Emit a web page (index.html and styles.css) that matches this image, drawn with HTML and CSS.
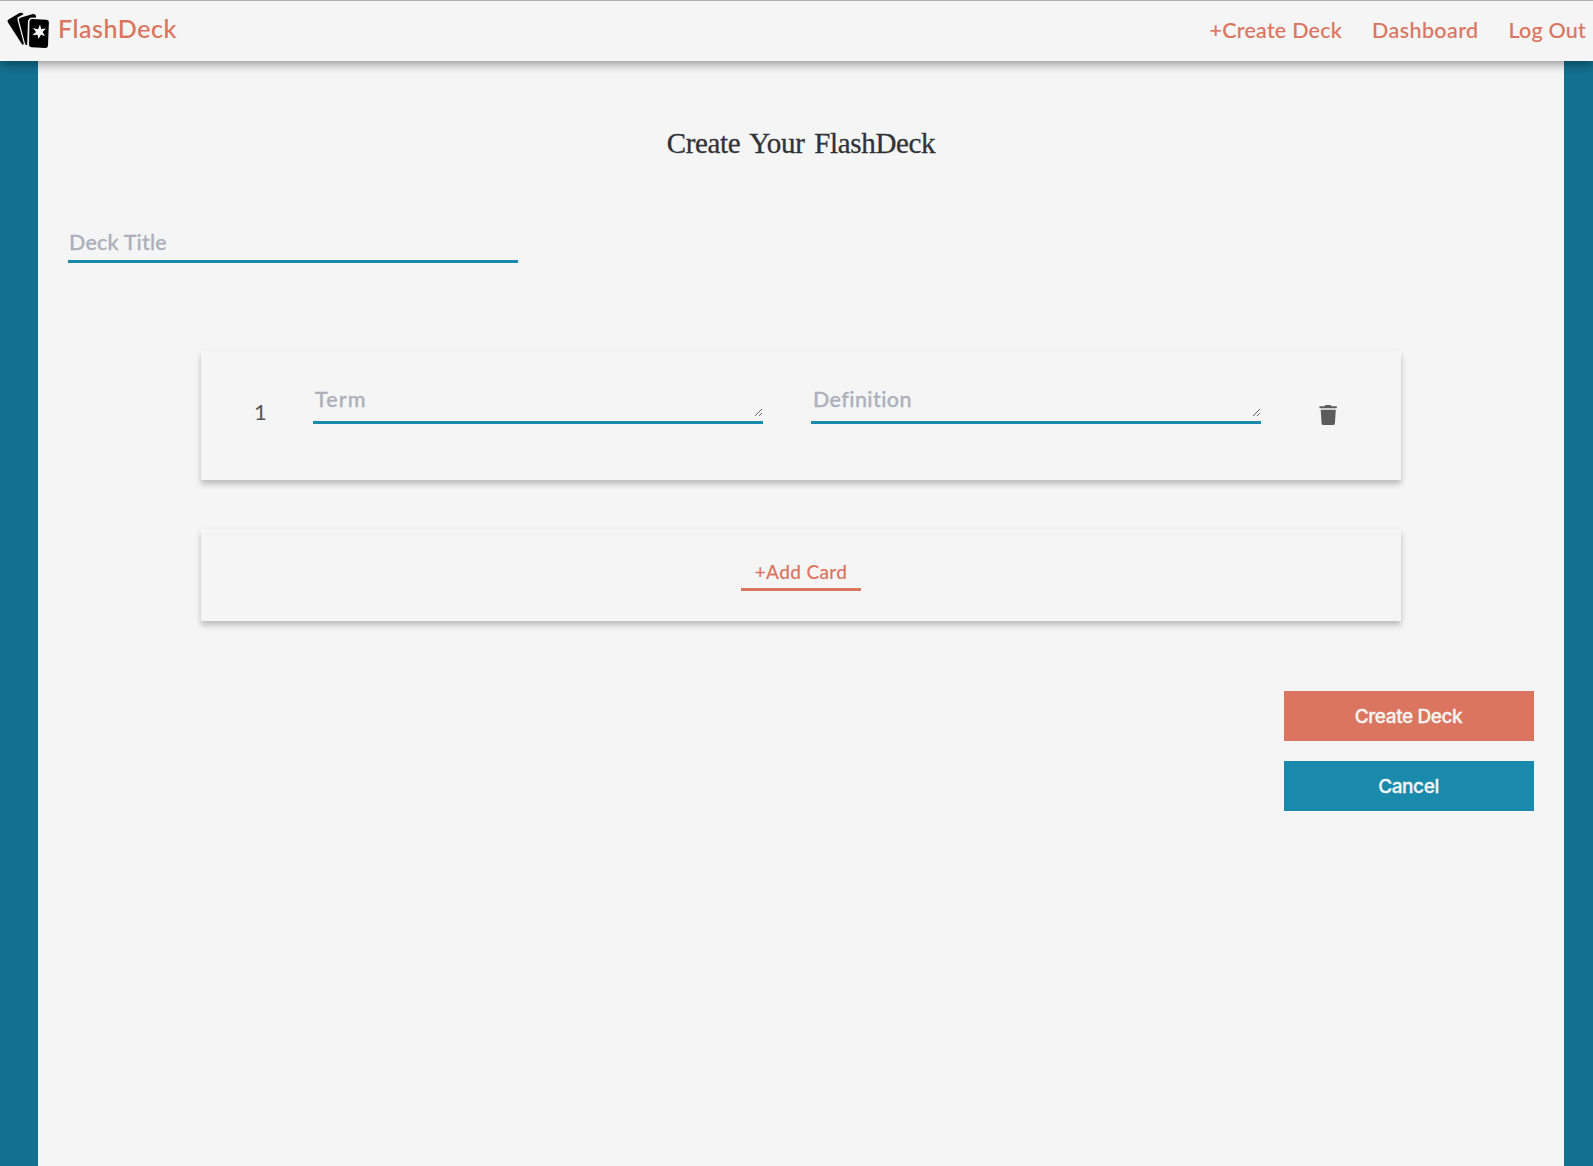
FILE: index.html
```html
<!DOCTYPE html>
<html lang="en">
<head>
<meta charset="utf-8">
<title>FlashDeck</title>
<link rel="stylesheet" href="styles.css">
</head>
<body>
<header class="header">
  <a class="brand">
    <svg class="logo" viewBox="0 0 56 56" aria-hidden="true">
      <path d="M8 22.500 Q6.500 21 8.500 19.500 L19 13.300 Q22 12 23.500 14.200 L17.500 17.500 L17.500 20 L23.800 43.500 Q23 46 21.500 43.500 Z"/>
      <path d="M19 20.500 Q18.500 18.200 21 17.500 L33 14 Q35.500 13.600 36 16 L36 17.400 L30 17.800 L28 20.500 L27.200 45 Q25.500 45.500 25 43.500 Z"/>
      <path d="M32 19 L46.500 19.700 Q49 20 48.900 22.300 L48 45.500 Q47.800 48 45.500 48 L31.500 47.300 Q29 47 29 44.700 L29.500 21.300 Q29.700 19 32 19 Z"/>
      <path class="logo-star" d="M40 24.500 L41.200 29 L46 28.500 L42.600 32 L45 36 L40.900 34.800 L38.500 39 L37.500 34.800 L32.300 35.300 L36 31.900 L33 28 L38 29.200 Z"/>
    </svg>
    <span class="brand-name">FlashDeck</span>
  </a>
  <nav class="nav">
    <a class="nav-create">+Create Deck</a>
    <a class="nav-dashboard">Dashboard</a>
    <a class="nav-logout">Log Out</a>
  </nav>
</header>
<main class="page">
  <h1 class="title"><span>Create Your FlashDeck</span></h1>
  <input class="field deck-title" type="text" placeholder="Deck Title">
  <section class="card">
    <span class="card-number">1</span>
    <label class="term"><textarea class="field" placeholder="Term"></textarea></label>
    <label class="definition"><textarea class="field" placeholder="Definition"></textarea></label>
    <svg class="trash" viewBox="0 0 18 22" aria-hidden="true">
      <path d="M.5 2.300 H5.500 L6.500 1 H11.500 L12.500 2.300 H17.800 V4.300 H.5 Z M1.700 5.800 H16.800 L15.900 19.500 Q15.700 21 14 21 H4.500 Q2.800 21 2.600 19.500 Z"/>
    </svg>
  </section>
  <section class="add-card">
    <a class="add-link"><span>+Add Card</span></a>
  </section>
  <div class="actions">
    <button class="button create"><span>Create Deck</span></button>
    <button class="button cancel"><span>Cancel</span></button>
  </div>
</main>
</body>
</html>
```
FILE: styles.css
```css
* { box-sizing: border-box; }

body {
  margin: 0;
  height: 1166px;
  display: flex;
  flex-direction: column;
  overflow: hidden;
  background: #137090;
  font-family: Lato, "Open Sans", sans-serif;
}

.header {
  position: relative;
  z-index: 1;
  flex: none;
  height: 61px;
  display: flex;
  justify-content: space-between;
  border-top: 1px solid #b0b0b0;
  background: #f5f5f5;
  color: #db7560;
  box-shadow: 0 3px 10px rgba(0, 0, 0, .4);
}

.brand { display: flex; }
.logo { width: 56px; height: 56px; margin-top: -1px; }
.logo-star { fill: #f5f5f5; }
.brand-name {
  margin-left: 2px;
  font-size: 25px;
  font-weight: 500;
  line-height: 54px;
  letter-spacing: .55px;
  -webkit-text-stroke: .1px;
}

.nav {
  display: flex;
  gap: 30px;
  padding-right: 7px;
  font-size: 21.5px;
  font-weight: 500;
  line-height: 59px;
  -webkit-text-stroke: .1px;
}
.nav-create { letter-spacing: .25px; }
.nav-dashboard { letter-spacing: .4px; }
.nav-logout { letter-spacing: .2px; }

.page {
  flex: 1;
  margin: 0 29px 0 38px;
  padding: 0 30px;
  background: #f5f5f5;
}

.title {
  margin: 62px 0 0;
  text-align: center;
  font: 500 29px/40px "Liberation Serif", serif;
  letter-spacing: -.35px;
  word-spacing: 3px;
  color: #303238;
  -webkit-text-stroke: .3px;
}

.field {
  display: block;
  width: 450px;
  padding: 2px;
  border: 0;
  border-radius: 0;
  outline: 0;
  background: transparent;
  font: 500 21.5px/27px Lato, "Open Sans", sans-serif;
  -webkit-text-stroke: .3px;
}
.field::placeholder { color: #adb0ba; opacity: 1; }
.deck-title {
  height: 36px;
  margin-top: 64px;
  padding: 0 1px 3px;
  border-bottom: 3px solid #198aac;
  letter-spacing: .2px;
}

.card, .add-card {
  width: 1200px;
  margin-left: 133px;
  display: flex;
  box-shadow: 0 4px 6px rgba(0, 0, 0, .24);
}
.card { height: 129px; margin-top: 88px; }
.card-number {
  width: 112px;
  padding-left: 53px;
  padding-top: 47px;
  font: 22px/28px Lato, sans-serif;
  color: #555;
}
.term, .definition {
  height: 40px;
  margin-top: 33px;
  border-bottom: 3px solid #198aac;
}
.card .field { height: 33px; overflow: hidden; }
.term .field { letter-spacing: 1.1px; }
.definition { margin-left: 48px; }
.definition .field { letter-spacing: .4px; }
.trash { width: 18px; height: 22px; margin: 52.5px 0 0 58px; fill: #5b5b5b; }

.add-card { height: 92px; margin-top: 49px; justify-content: center; }
.add-link {
  width: 120px;
  height: 32px;
  margin-top: 30px;
  border-bottom: 3px solid #db7560;
  text-align: center;
  font-size: 19px;
  font-weight: 500;
  line-height: 25px;
  letter-spacing: .35px;
  color: #db7560;
  -webkit-text-stroke: .1px;
}

.actions {
  display: flex;
  flex-direction: column;
  align-items: flex-end;
  gap: 20px;
  margin-top: 70px;
}
.button {
  width: 250px;
  height: 50px;
  padding: 0 1px 0 0;
  border: 0;
  color: #f5f5f5;
  font: 500 19px Inter, sans-serif;
  letter-spacing: -.4px;
  -webkit-text-stroke: .3px;
}
.create { background: #db7560; }
.cancel { background: #198aac; }
```
